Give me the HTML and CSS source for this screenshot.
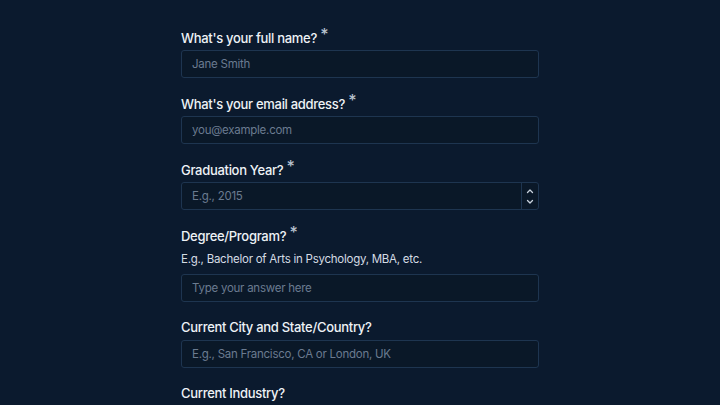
FILE: index.html
```html
<!DOCTYPE html>
<html lang="en">
  <head>
    <meta charset="UTF-8" />
    <meta name="viewport" content="width=device-width, initial-scale=1.0" />
    <title>Alumni Survey</title>
    <link rel="stylesheet" href="styles.css">
  </head>
  <body>
    <form class="form">
      <div class="field">
        <label class="label" for="name">What's your full name? <span class="req">*</span></label>
        <input class="input" id="name" type="text" placeholder="Jane Smith" />
      </div>
      <div class="field">
        <label class="label" for="email">What's your email address? <span class="req">*</span></label>
        <input class="input" id="email" type="email" placeholder="you@example.com" />
      </div>
      <div class="field">
        <label class="label" for="year">Graduation Year? <span class="req">*</span></label>
        <div class="number">
          <input class="input" id="year" type="text" placeholder="E.g., 2015" />
          <div class="spinner">
            <svg width="10" height="6" viewBox="0 0 10 6"><path d="M2.5 4.5 L5 2 L7.5 4.5" fill="none" stroke="#c9d2dd" stroke-width="1.3" stroke-linecap="round" stroke-linejoin="round"/></svg>
            <svg width="10" height="6" viewBox="0 0 10 6"><path d="M2.5 1.5 L5 4 L7.5 1.5" fill="none" stroke="#c9d2dd" stroke-width="1.3" stroke-linecap="round" stroke-linejoin="round"/></svg>
          </div>
        </div>
      </div>
      <div class="field">
        <label class="label" for="degree">Degree/Program? <span class="req">*</span></label>
        <p class="help">E.g., Bachelor of Arts in Psychology, MBA, etc.</p>
        <input class="input" id="degree" type="text" placeholder="Type your answer here" />
      </div>
      <div class="field">
        <label class="label" for="city">Current City and State/Country?</label>
        <input class="input" id="city" type="text" placeholder="E.g., San Francisco, CA or London, UK" />
      </div>
      <div class="field">
        <label class="label" for="industry">Current Industry?</label>
        <input class="input" id="industry" type="text" placeholder="E.g., Technology, Healthcare" />
      </div>
    </form>
  </body>
</html>
```

FILE: styles.css
```css
body {
  margin: 0;
  background-color: #0b1a2e;
  font-family: Inter, "Noto Sans", sans-serif;
  color: #eef2f6;
  height: 405px;
  overflow: hidden;
}
.form {
  width: 358px;
  margin: 0 auto;
  padding-top: 27px;
}
.field {
  display: flex;
  flex-direction: column;
  margin-bottom: 15px;
}
.label {
  font-size: 13px;
  font-weight: 500;
  letter-spacing: -0.3px;
  line-height: 20px;
  height: 20px;
  margin-bottom: 3px;
  color: #eef2f6;
}
.req {
  font-size: 16px;
  position: relative;
  top: -3px;
  color: #b8c2ce;
}
.help {
  margin: 1px 0 5px;
  font-size: 11.5px;
  letter-spacing: -0.25px;
  line-height: 20px;
  color: #d5dce4;
}
.input {
  box-sizing: border-box;
  width: 100%;
  height: 28px;
  padding: 0 10px;
  background-color: #0a1828;
  border: 1px solid #1e3550;
  border-radius: 3px;
  color: #eef2f6;
  font-family: Inter, "Noto Sans", sans-serif;
  font-size: 11.5px;
  letter-spacing: -0.25px;
  outline: none;
}
.input::placeholder {
  color: #6b7b90;
}
.number {
  display: flex;
  position: relative;
}
.spinner {
  position: absolute;
  right: 1px;
  top: 1px;
  bottom: 1px;
  width: 17px;
  border-left: 1px solid #1e3550;
  display: flex;
  flex-direction: column;
  align-items: center;
  justify-content: space-around;
  padding: 2px 0;
  box-sizing: border-box;
}
```
